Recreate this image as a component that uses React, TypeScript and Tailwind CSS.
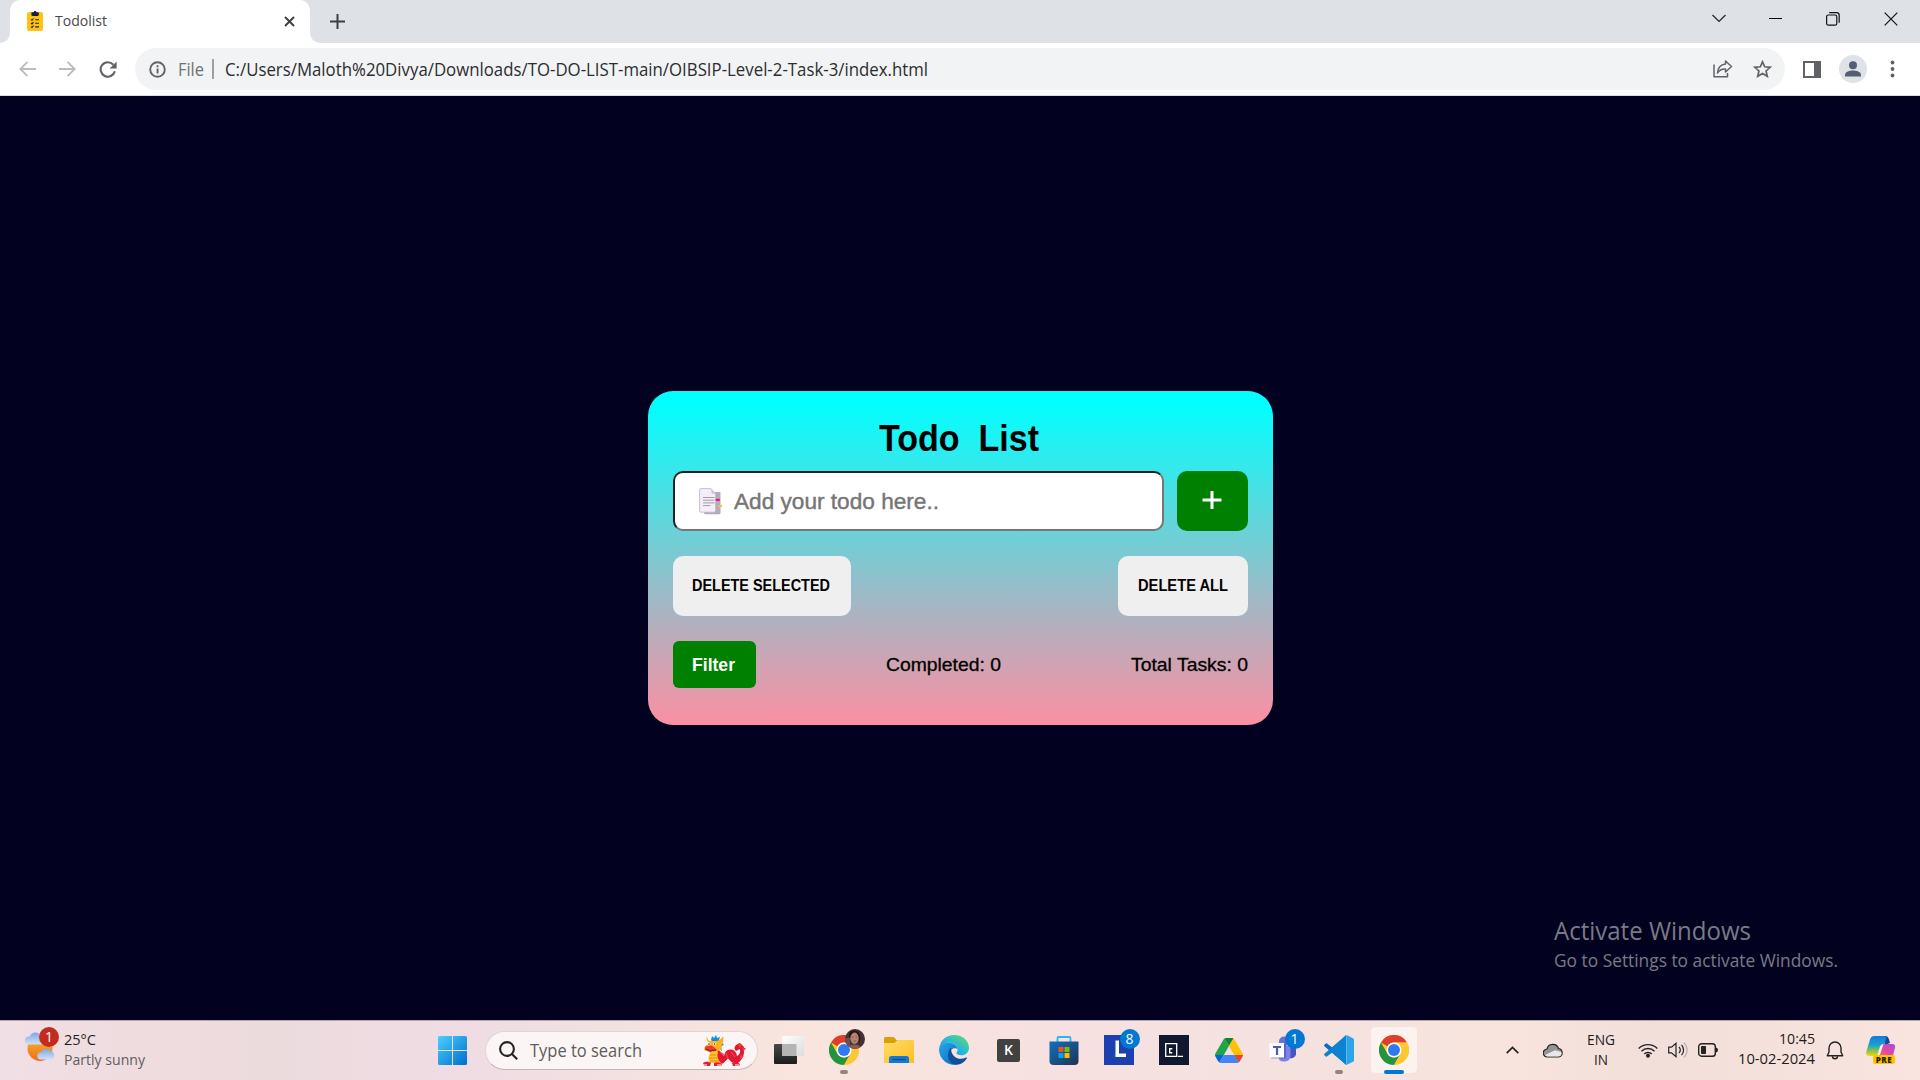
import React, { useLayoutEffect, useRef } from "react";

const UI = "font-['Open_Sans','Noto_Sans',sans-serif]";

/* A single line of text stretched or squeezed to a given width. */
function Fit({ w, className = "", children }: { w: number; className?: string; children: React.ReactNode }) {
  const ref = useRef<HTMLSpanElement>(null);
  useLayoutEffect(() => {
    const el = ref.current;
    if (!el) return;
    el.style.transform = "none";
    const natural = el.getBoundingClientRect().width;
    if (natural > 0) el.style.transform = `scaleX(${w / natural})`;
  }, [w]);
  return (
    <span className={"block shrink-0 whitespace-pre " + className} style={{ width: w }}>
      <span ref={ref} className="inline-block origin-left">{children}</span>
    </span>
  );
}

function Clipboard() {
  return (
    <svg className="ml-[17px] shrink-0" width="16" height="20" viewBox="0 0 16 20">
      <rect x="0" y="1" width="16" height="19" rx="2.2" fill="#ffc20e" />
      <path d="M5 1.2h1.8a1.3 1.3 0 0 1 2.6 0H11q.8 0 .8.8v1.8q0 1.2-1.2 1.2H5.6Q4.400 5 4.400 3.800V2q0-.8.6-.8z" fill="#14213d" />
      <path d="M4 8.400l1 .9 1.500-1.800M4 12l1 .9 1.500-1.800M4 15.600l1 .9 1.500-1.800M8.200 8.700H12M8.200 12.300H12M8.200 15.900H12" stroke="#14213d" strokeWidth="1.100" fill="none" />
    </svg>
  );
}

function TabStrip() {
  return (
    <div className="flex h-[43px] bg-[#dee1e6]">
      <div className="flex w-[10px] items-end bg-white">
        <div className="h-full w-full rounded-br-[10px] bg-[#dee1e6]" />
      </div>
      <div className="flex h-full w-[300px] items-center rounded-t-[10px] bg-white pb-[2px]">
        <Clipboard />
        <Fit w={52} className="ml-[12px] text-[14.500px] leading-5 text-[#45494d]">Todolist</Fit>
        <svg className="mt-[2px] ml-[177px]" width="11" height="11" viewBox="0 0 11 11" stroke="#3c4043" strokeWidth="1.900" fill="none">
          <path d="M1 1l9 9M10 1l-9 9" />
        </svg>
      </div>
      <div className="w-[10px] bg-white">
        <div className="h-full w-full rounded-bl-[10px] bg-[#dee1e6]" />
      </div>
      <svg className="mt-[13px] ml-[9px]" width="17" height="17" viewBox="0 0 17 17" stroke="#3c4043" strokeWidth="2" fill="none">
        <path d="M8.500 1v15M1 8.500h15" />
      </svg>
      <div className="ml-auto flex h-[37px] items-center pr-[22px]">
        <svg width="14" height="9" viewBox="0 0 14 9" fill="none" stroke="#222" strokeWidth="1.200"><path d="M.5 1L7 7.500 13.500 1" /></svg>
        <svg className="ml-[43px]" width="14" height="2" viewBox="0 0 14 2"><path d="M0 0h13v1H0z" fill="#000" /></svg>
        <svg className="ml-[43px]" width="14" height="14" viewBox="0 0 14 14" fill="none" stroke="#111" strokeWidth="1.200">
          <rect x=".6" y="3" width="10.200" height="10.200" rx="1.800" /><path d="M3.200.7H10.500q2.700 0 2.700 2.700V10.800" />
        </svg>
        <svg className="ml-[44px]" width="14" height="14" viewBox="0 0 14 14" fill="none" stroke="#111" strokeWidth="1.200"><path d="M.7.7l12.600 12.600M13.300.7L.7 13.300" /></svg>
      </div>
    </div>
  );
}

function Toolbar() {
  return (
    <div className="flex h-[53px] items-center border-b border-[#dcdee1] bg-white">
      <svg className="ml-[19px]" width="17" height="16" viewBox="0 0 17 16" fill="none" stroke="#babcbe" strokeWidth="1.800"><path d="M17 8H1.500M8.500.8L1.300 8l7.200 7.200" /></svg>
      <svg className="ml-[23px]" width="17" height="16" viewBox="0 0 17 16" fill="none" stroke="#babcbe" strokeWidth="1.800"><path d="M0 8h15.500M8.500.8L15.700 8l-7.200 7.200" /></svg>
      <svg className="ml-[23px]" width="18" height="17" viewBox="0 0 18 17">
        <path d="M15.800 10.200A7.200 7.200 0 1 1 14.300 3.800" fill="none" stroke="#5f6368" strokeWidth="2.100" />
        <path d="M17.600.5V7.500H10.600z" fill="#5f6368" />
      </svg>
      <div className="ml-[18px] flex h-[42px] w-[1650px] items-center rounded-full bg-[#f1f3f4]">
        <svg className="ml-[14px]" width="17" height="17" viewBox="0 0 17 17">
          <circle cx="8.500" cy="8.500" r="7.300" fill="none" stroke="#5f6368" strokeWidth="1.900" />
          <path d="M7.600 7.500h1.900v5H7.600zM7.600 4.300h1.900v1.900H7.600z" fill="#5f6368" />
        </svg>
        <Fit w={26} className="ml-[12px] text-[17.500px] leading-6 text-[#6d7175]">File</Fit>
        <span className="ml-[8px] h-[20px] w-[2px] bg-[#9aa0a6]" />
        <Fit w={703} className="ml-[11px] text-[17.500px] leading-6 text-[#2c2d30]">C:/Users/Maloth%20Divya/Downloads/TO-DO-LIST-main/OIBSIP-Level-2-Task-3/index.html</Fit>
        <svg className="ml-auto" width="20" height="18" viewBox="0 0 20 18" fill="none" stroke="#5f6368" strokeWidth="1.500">
          <path d="M1 4.500V16.800H14.500V13M12.500 1l6 5.500-6 5.500V9Q7.500 8.500 4.500 13 5 5 12.500 4z" strokeLinejoin="round" />
        </svg>
        <svg className="ml-[20px] mr-[13px]" width="19" height="18" viewBox="0 0 19 18" fill="none" stroke="#5f6368" strokeWidth="1.700">
          <path d="M9.500 1.800l2.200 5 5.500.5-4.150 3.650 1.250 5.400L9.500 13.500l-4.800 2.850 1.250-5.400L1.800 7.300l5.500-.5z" />
        </svg>
      </div>
      <svg className="ml-[18px]" width="18" height="17" viewBox="0 0 18 17">
        <path d="M0 0h18v17H0zM2 2v13h9V2z" fill="#5f6368" fillRule="evenodd" />
      </svg>
      <svg className="ml-[18px]" width="28" height="28" viewBox="0 0 28 28">
        <circle cx="14" cy="14" r="14" fill="#dfe2e7" />
        <circle cx="14" cy="10.200" r="4" fill="#535f75" />
        <path d="M6 21.500v-1.800C6 16.800 11 15.500 14 15.500s8 1.300 8 4.200v1.800z" fill="#535f75" />
      </svg>
      <svg className="ml-[23px]" width="5" height="18" viewBox="0 0 5 18" fill="#5f6368">
        <circle cx="2.500" cy="2.500" r="1.900" /><circle cx="2.500" cy="9" r="1.900" /><circle cx="2.500" cy="15.500" r="1.900" />
      </svg>
    </div>
  );
}

function PageIcon() {
  return (
    <svg className="mr-[12px] ml-[24px] shrink-0" width="23" height="27" viewBox="0 0 23 27">
      <path d="M5 4h15.500q1 0 1 1v20q0 1.200-1.200 1.200H6.500Q5 26.200 5 24.700z" fill="#b4acbc" />
      <path d="M1.700.6H12l4.600 5.200V22.500q0 1.700-1.700 1.700H2Q.6 24.200.6 22.800V1.700Q.6.600 1.700.6z" fill="#f3eef8" stroke="#bcb3c4" strokeWidth=".8" />
      <path d="M12.300.8V4q0 1.700 1.700 1.700h2.700z" fill="#cdc4d6" />
      <path d="M4 9.500h11.500M4 12.200h11.500M4 14.900h11.500M4 17.600h7.500" stroke="#998ea4" strokeWidth=".9" />
      <rect x="16.800" y="10.800" width="4" height="2.200" rx=".6" fill="#f70a8d" /><rect x="19.500" y="17" width="3.500" height="2.200" rx=".5" fill="#f9c23c" />
    </svg>
  );
}

function TodoCard() {
  return (
    <div className="flex h-[334px] w-[625px] flex-col rounded-[25px] bg-[linear-gradient(#00ffff_0%,#00ffff_3%,#67d3d9_41%,#a9b4c2_66%,#fb90a3_100%)] p-[25px] font-['Liberation_Sans',Arial,sans-serif] text-black">
      <h1 className="flex justify-center pt-[1px] pr-[2px] text-[36px] leading-[43px] font-bold"><Fit w={160}>{"Todo  List"}</Fit></h1>
      <div className="mt-[11px] flex justify-between">
        <div className="flex h-[60px] w-[491px] items-center rounded-[10px] border-2 border-t-[#222] border-r-[#767676] border-b-[#767676] border-l-[#222] bg-white">
          <PageIcon />
          <Fit w={205} className="pt-[1px] text-[22px] leading-[30px] text-[#757575] [-webkit-text-stroke:0.4px_#757575]">Add your todo here..</Fit>
        </div>
        <button className="flex h-[60px] w-[71px] items-center justify-center rounded-[10px] bg-[#008000]">
          <svg width="20" height="20" viewBox="0 0 20 20" fill="#fff" className="-mt-[2px]"><path d="M8.500 1h3v18h-3zM.5 8.500h19v3H.5z" /></svg>
        </button>
      </div>
      <div className="mt-[25px] flex justify-between text-[17px] leading-6 font-bold">
        <button className="flex h-[60px] items-center rounded-[10px] bg-[#efefef] pr-[21px] pl-[19px]"><Fit w={138}>DELETE SELECTED</Fit></button>
        <button className="flex h-[60px] items-center rounded-[10px] bg-[#efefef] px-[20px]"><Fit w={90}>DELETE ALL</Fit></button>
      </div>
      <div className="mt-[25px] flex items-center justify-between text-[18.500px] leading-6">
        <button className="flex h-[47px] w-[83px] items-center rounded-[6px] bg-[#008000] px-[20px] font-bold text-white"><Fit w={43} className="-ml-[1px]">Filter</Fit></button>
        <Fit w={115} className="[-webkit-text-stroke:0.3px_#000]">Completed: 0</Fit>
        <Fit w={117} className="[-webkit-text-stroke:0.3px_#000]">Total Tasks: 0</Fit>
      </div>
    </div>
  );
}

function Chrome() {
  return (
    <svg width="30" height="30" viewBox="0 0 48 48">
      <circle cx="24" cy="24" r="24" fill="#ffcd1d" />
      <path d="M3.200 12A24 24 0 0 1 44.800 12H24A12 12 0 0 0 13.600 18z" fill="#e33b2e" />
      <path d="M3.200 12L13.600 30A12 12 0 0 0 24 36 12 12 0 0 0 34.400 30L24 48A24 24 0 0 1 3.200 12z" fill="#229342" />
      <path d="M44.800 12A24 24 0 0 1 24 48L34.400 30Q38 20 24 12z" fill="#fcc934" />
      <circle cx="24" cy="24" r="12" fill="#fff" /><circle cx="24" cy="24" r="9.600" fill="#2f7af0" />
    </svg>
  );
}

function TaskView() {
  return (
    <svg width="30" height="30" viewBox="0 0 30 30">
      <defs>
        <linearGradient id="tvd" x2="0" y2="1"><stop stopColor="#494949" /><stop offset="1" stopColor="#1c1c1c" /></linearGradient>
        <linearGradient id="tvl" x2="1" y2="1"><stop stopColor="#fff" /><stop offset="1" stopColor="#dcdcdc" /></linearGradient>
      </defs>
      <rect x="0" y="9" width="23" height="20" rx="1" fill="url(#tvd)" />
      <rect x="8" y="1" width="22" height="20" rx="1" fill="url(#tvl)" /><path d="M8 9h14.500v12H8z" fill="#b4b4b4" />
    </svg>
  );
}

function Portrait() {
  return (
    <svg className="absolute -top-[6px] left-[16px]" width="20" height="20" viewBox="0 0 20 20">
      <defs><clipPath id="pc"><circle cx="10" cy="10" r="10" /></clipPath></defs>
      <g clipPath="url(#pc)">
        <path d="M0 0h20v20H0z" fill="#443134" /><path d="M0 9h5v8H0z" fill="#665054" />
        <ellipse cx="9.500" cy="9" rx="4.200" ry="6" fill="#b98270" />
        <path d="M4 7Q4 1 10 1.500q5 0 5.500 8L14 15V8Q12 3 9.500 3.500 6 4 5 9z" fill="#241819" />
        <path d="M6.800 8H8.500M10.500 8H12.200M8.500 12h2.500" stroke="#7c463d" strokeWidth=".8" />
        <path d="M3 20q1-5 6-4.500 6 0 8 4.500z" fill="#8b5b50" />
      </g>
    </svg>
  );
}

function Folder() {
  return (
    <svg width="30" height="30" viewBox="0 0 30 30">
      <defs><linearGradient id="fo" x2="1" y2="1"><stop stopColor="#ffdc65" /><stop offset="1" stopColor="#fcbf22" /></linearGradient></defs>
      <path d="M0 3.500Q0 2 1.500 2H9q1 0 1.500.8L13 5.500H29V13H0z" fill="#dca007" />
      <path d="M0 8h9.500q1 0 1.700-.8L12.600 6q.7-.8 1.700-.8H29q1 0 1 1V28H0z" fill="url(#fo)" />
      <path d="M5 28v-4.500Q5 21 7.500 21h15Q25 21 25 23.500V28z" fill="#1478d4" /><path d="M8.500 24.500h13" stroke="#084a92" strokeWidth="1.200" />
    </svg>
  );
}

function Edge() {
  return (
    <svg width="30" height="30" viewBox="0 0 30 30">
      <defs>
        <linearGradient id="e1" x1="0" y1="1" x2="1" y2="0"><stop stopColor="#168cd8" /><stop offset=".5" stopColor="#26b9dc" /><stop offset="1" stopColor="#66e057" /></linearGradient>
        <linearGradient id="e2" x1="0" y1="0" x2="1" y2="1"><stop stopColor="#29a7e8" /><stop offset="1" stopColor="#0869bf" /></linearGradient>
      </defs>
      <path d="M.3 13C1.500 5 7.500 0 15 0c9 0 15 6 15 12.700 0 4.700-3.600 7.600-7.600 7.600-3 0-5-1-5-2.200 0-.9 1.300-1.400 1.300-3.600C18.700 10.500 14 7.800 9.500 7.800 4.500 7.800 1.500 10.300.3 13z" fill="url(#e1)" />
      <path d="M.2 13C1.500 9.500 5 7.700 9.600 7.800c4.900.1 9 3 9 6.700-3-3.500-9 .5-8 6 .8 5.500 5 8.500 8.500 8.600A15 15 0 0 1 0 15z" fill="url(#e2)" />
      <path d="M12.200 12.700C7 16.500 8 29 17.500 29.800c4.500-.3 8-2.600 10.300-6.400.4-.7-.2-1.100-.8-.8C19 26.500 11.200 20.500 12.200 12.700z" fill="#114f99" />
    </svg>
  );
}

function Store() {
  return (
    <svg width="30" height="30" viewBox="0 0 30 30">
      <defs><linearGradient id="st" x2="1" y2="1"><stop stopColor="#0f72bd" /><stop offset="1" stopColor="#213153" /></linearGradient></defs>
      <path d="M8.500 8V3.200Q8.500 2 9.700 2h10.600q1.200 0 1.200 1.200V8" fill="none" stroke="#29b5ee" strokeWidth="1.800" />
      <path d="M.5 6.500h29V26q0 4-4 4h-21q-4 0-4-4z" fill="url(#st)" />
      <path d="M9.500 12H14.500v5h-5z" fill="#f25022" /><path d="M15.500 12h5v5h-5z" fill="#7fba00" /><path d="M9.500 18h5v5h-5z" fill="#00a4ef" /><path d="M15.500 18h5v5h-5z" fill="#ffb900" />
    </svg>
  );
}

function Drive() {
  return (
    <svg width="28" height="25" viewBox="0 0 87.3 78">
      <path d="M6.600 66.850l3.850 6.650c.8 1.400 1.950 2.500 3.300 3.300l13.750-23.800H0c0 1.550.4 3.100 1.200 4.500z" fill="#0066da" />
      <path d="M43.650 25L29.900 1.200c-1.350.8-2.500 1.900-3.300 3.300L1.200 48.500A9 9 0 0 0 0 53h27.500z" fill="#23a34a" />
      <path d="M73.550 76.800c1.350-.8 2.500-1.900 3.300-3.300l1.600-2.750L86.100 57.500c.8-1.400 1.200-2.950 1.200-4.500H59.800l5.850 11.500z" fill="#ea4335" />
      <path d="M43.650 25L57.400 1.200C56.050.4 54.500 0 52.900 0H34.400c-1.600 0-3.150.45-4.500 1.200z" fill="#118336" />
      <path d="M59.800 53H27.500L13.750 76.800c1.350.8 2.900 1.200 4.500 1.200h50.800c1.600 0 3.150-.45 4.500-1.200z" fill="#4285f4" />
      <path d="M73.400 26.500L60.700 4.500c-.8-1.400-1.950-2.500-3.300-3.300L43.650 25l16.150 28h27.450c0-1.550-.4-3.100-1.200-4.500z" fill="#ffc107" />
    </svg>
  );
}

function Teams() {
  return (
    <svg width="30" height="30" viewBox="0 0 30 30">
      <circle cx="15" cy="6.500" r="5" fill="#6870d2" /><path d="M20 11h7v8.500q-1 4-7 4z" fill="#4b53bc" />
      <path d="M10 11h11.500v10q-.5 5.500-6.500 5.500T9.500 21z" fill="#7b83eb" />
      <path d="M2 9h15v14.500H2z" fill="#4048a8" opacity=".5" /><path d="M.5 8h14.500v14.500H.5z" fill="#fff" />
      <path d="M4 11h8v2H9.100v7H6.900v-7H4z" fill="#5059b8" />
    </svg>
  );
}

function VsCode() {
  return (
    <svg width="30" height="30" viewBox="0 0 30 30">
      <path d="M22 .3L8.500 12.700 3 8.400q-.6-.4-1.200.1L.4 9.800q-.6.7 0 1.400L22 29.700V21z" fill="#0a6cbd" />
      <path d="M22 29.700L8.500 17.300 3 21.600q-.6.4-1.200-.1L.4 20.200q-.6-.7 0-1.400L22 .3V9z" fill="#0b83d2" />
      <path d="M21.500.3l1.500 0 6 2.900q1 .5 1 1.600V25.200q0 1.100-1 1.600l-6.100 2.900h-1.400q.8-.3.800-1.400V1.700Q22.300.6 21.500.3z" fill="#2ba4ea" />
    </svg>
  );
}

function Badge({ children }: { children: React.ReactNode }) {
  return <span className="absolute -top-[6px] left-[16px] flex h-[20px] w-[20px] items-center justify-center rounded-full bg-[#0078d4] text-[14px] leading-none font-medium text-white">{children}</span>;
}

function PinnedApp({ children, mark }: { children: React.ReactNode; mark?: boolean }) {
  return (
    <div className="relative flex h-[60px] w-[55px] items-center justify-center">
      <div className="relative flex h-[30px] w-[30px] items-center justify-center">{children}</div>
      {mark && <span className="absolute bottom-[6px] h-[4px] w-[8px] rounded-full bg-[#908681]" />}
    </div>
  );
}

function Weather() {
  return (
    <div className="relative ml-[25px] h-[46px] w-[35px]">
      <svg width="34" height="36" viewBox="0 0 34 36">
        <defs>
          <linearGradient id="su" x2="0" y2="1"><stop stopColor="#fbb62d" /><stop offset="1" stopColor="#ed701b" /></linearGradient>
          <linearGradient id="cl" x2="0" y2="1"><stop stopColor="#7ea6e4" /><stop offset="1" stopColor="#d0e1f8" /></linearGradient>
        </defs>
        <circle cx="15" cy="21.500" r="12.500" fill="url(#su)" />
        <path d="M4 17.500a4 4 0 0 1 0-8h.6a6 6 0 0 1 10.900-1Q21 10 20 17.500z" fill="url(#cl)" />
        <path d="M16 32.500a3.700 3.700 0 0 1 0-7.400h.5a5.300 5.300 0 0 1 9.500-.8 4.200 4.200 0 0 1 0 8.200z" fill="url(#cl)" />
      </svg>
      <span className="absolute top-0 left-[14px] flex h-[20px] w-[20px] items-center justify-center rounded-full bg-[#c42b1c] text-[14px] leading-none font-medium text-white">1</span>
    </div>
  );
}

function Dragon() {
  return (
    <svg width="43" height="31" viewBox="0 0 43 31">
      <path d="M8 5l1-4 2 2 2-3 1 3 3-1-1 3 4 0-2 3 3 1-3 3 1 4-5-4z" fill="#178bdc" />
      <path d="M15 14q4 5 6 7 1-7 7-6.500 5 .5 6 6.500 4-2 3-7l-4 2q-3-3 0-6l4-2 4 4 0 6q-1 7-7 10.500l-5-1-4-4-5 5h-9z" fill="#df1836" />
      <path d="M35 8.500l4 1-2 4zM39 12l4 1.500-3 3zM37 20l4 1-4 3z" fill="#f2402f" />
      <path d="M4 1q-2 5 3 7l-5 3-1 4 8 3 9-3 1-6q2-3 1-8-2 4-6 5L8 6Q4 6 4 1z" fill="#ffb116" />
      <path d="M2 12l5-2 4 2 3 3-5 3-6-3z" fill="#f23530" /><path d="M2 14q5 3 11 1" stroke="#8d1425" fill="none" />
      <path d="M9 16l6 1q-2 6 3 11H7Q3 22 9 16z" fill="#ffc22b" /><path d="M7 20h6M6 23h8M7 26h9" stroke="#e58a11" />
      <path d="M0 28q4-3 8 0l-1 3H1zM11 28q5-2 8 1l-1 2h-7zM29 28q5-2 8 1l-1 2h-6z" fill="#e02038" /><path d="M0 30h4M14 30h4M32 30h4" stroke="#fff" />
      <circle cx="6" cy="9" r="1.500" fill="#fff" /><circle cx="6" cy="9" r=".8" fill="#123" /><circle cx="11.500" cy="9" r="1.600" fill="#fff" /><circle cx="11.500" cy="9" r=".8" fill="#123" />
      <path d="M17 17l4 3M23 18l2 6M28 17l4 5" stroke="#f5493f" strokeWidth="1.200" />
    </svg>
  );
}

function Tray() {
  return (
    <div className="ml-auto flex h-full items-center pr-[24px]">
      <svg width="13" height="8" viewBox="0 0 13 8" fill="none" stroke="#222" strokeWidth="1.700"><path d="M.7 7.200l5.800-5.700 5.800 5.700" /></svg>
      <svg className="ml-[24px]" width="20" height="15" viewBox="0 0 20 15">
        <path d="M4.500 14A4 4 0 0 1 4 6 6 6 0 0 1 15.500 5.500 4.300 4.300 0 0 1 15.500 14z" fill="#949494" stroke="#222" strokeWidth="1.200" />
        <path d="M2 12L12 7.300l6.300 1.800q1.200 4.300-2.800 4.300H4.500Q2.800 13.300 2 12z" fill="#e8e8e8" />
      </svg>
      <div className="ml-[24px] flex w-[28px] flex-col items-center text-[14.500px] leading-5">
        <Fit w={28}>ENG</Fit><Fit w={14}>IN</Fit>
      </div>
      <svg className="ml-[23px]" width="20" height="16" viewBox="0 0 20 16" fill="none" stroke="#222" strokeWidth="1.400">
        <path d="M.7 6.500a13 13 0 0 1 18.600 0M3.500 9.200a9.200 9.200 0 0 1 13 0M6.300 12a5.200 5.200 0 0 1 7.400 0" /><circle cx="10" cy="13.800" r="1.300" fill="#222" />
      </svg>
      <svg className="ml-[10px]" width="20" height="16" viewBox="0 0 20 16" fill="none" stroke="#222" strokeWidth="1.200">
        <path d="M.7 5.200H3.500L8 1.300V14.700L3.500 10.800H.7zM11 5a4.500 4.500 0 0 1 0 6M13.500 2.800a7.600 7.600 0 0 1 0 10.400" /><path d="M16 .8a10 10 0 0 1 0 14.400" stroke="#bbb2b0" />
      </svg>
      <svg className="ml-[10px]" width="20" height="14" viewBox="0 0 20 14">
        <rect x=".7" y=".8" width="16.600" height="12.400" rx="2.800" fill="none" stroke="#222" strokeWidth="1.400" /><rect x="3" y="3" width="5" height="8" rx=".8" fill="#222" /><path d="M18 4.500q2 .3 2 2.500t-2 2.500z" fill="#222" />
      </svg>
      <div className="mr-[1px] mb-[2px] ml-[20px] flex w-[77px] flex-col items-end text-[14.500px] leading-5">
        <Fit w={36}>10:45</Fit><Fit w={77}>10-02-2024</Fit>
      </div>
      <svg className="ml-[10px]" width="18" height="19" viewBox="0 0 18 19" fill="none" stroke="#222" strokeWidth="1.400">
        <path d="M9 1a6 6 0 0 0-6 6v4L1.300 14.800H16.700L15 11V7A6 6 0 0 0 9 1z" strokeLinejoin="round" /><path d="M6.500 15.200a2.500 2.500 0 0 0 5 0" />
      </svg>
      <div className="relative ml-[22px] h-[28px] w-[30px]">
        <svg width="30" height="28" viewBox="0 0 30 28">
          <defs>
            <linearGradient id="c1" x2="0" y2="1"><stop stopColor="#1679dc" /><stop offset=".45" stopColor="#1ba0d0" /><stop offset=".75" stopColor="#8ac54a" /><stop offset="1" stopColor="#f5d50d" /></linearGradient>
            <linearGradient id="c2" x1="1" x2="0" y2="1"><stop stopColor="#a14be3" /><stop offset=".5" stopColor="#e94a9c" /><stop offset="1" stopColor="#ff8a52" /></linearGradient>
          </defs>
          <path d="M17 0h2.500q2.500 0 3.300 2.800L24 7l-5 2z" fill="#14489f" />
          <path d="M8 0h10q3 0 2 3L15.500 17q-1 3-4 3H3.500Q-.8 20 .5 15L4 3.500Q5 0 8 0z" fill="url(#c1)" />
          <path d="M17.500 8H26q4 0 3 4l-2.500 9q-1 4-4.500 4h-9q-2.500 0-1.500-3L15 10.500Q15.800 8 17.500 8z" fill="url(#c2)" />
          <path d="M14 10.500q.8-2.500 3.500-2.500L14 18.500q-.8 2-3 2z" fill="#fff4ef" />
        </svg>
        <span className="absolute top-[19px] left-[7px] flex h-[9px] w-[22px] items-center justify-center rounded-[2px] bg-[#ffc400] text-[8px] leading-none font-extrabold tracking-[0.500px] text-[#2a2000]">PRE</span>
      </div>
    </div>
  );
}

function Taskbar() {
  return (
    <div className="flex h-[60px] items-center border-t border-[#b4a8ad] bg-[linear-gradient(90deg,#f1dfe6_0%,#efdcdf_7%,#ecdbdd_14%,#efdce4_23%,#f3e0e1_32%,#f9e5dd_42%,#f6e1e0_55%,#f5e2df_70%,#f9e4dd_78%,#f2dfda_86%,#f9e4df_100%)] pb-[1px] text-[#1f1c1c]">
      <Weather />
      <div className="mb-[1px] ml-[4px] w-[96px] text-[14.500px] leading-5">
        <Fit w={32}>25°C</Fit><Fit w={81} className="text-[#625c5d]">Partly sunny</Fit>
      </div>
      <svg className="ml-[278px]" width="29" height="29" viewBox="0 0 29 29">
        <defs><linearGradient id="wi" x2="1" y2="1"><stop stopColor="#4bd0ff" /><stop offset="1" stopColor="#006dcd" /></linearGradient></defs>
        <path d="M1.500 0H14v14H0V1.500Q0 0 1.500 0zM15 0h12.500Q29 0 29 1.500V14H15zM0 15h14v14H1.500Q0 29 0 27.500zM15 15h14v12.500q0 1.500-1.500 1.500H15z" fill="url(#wi)" />
      </svg>
      <div className="ml-[18px] flex h-[39px] w-[273px] items-center rounded-full border border-[#e4d3d2] border-b-[#c4b4b3] bg-[#fbf6f5]">
        <svg className="ml-[13px]" width="19" height="19" viewBox="0 0 19 19" fill="none" stroke="#242424" strokeWidth="2.100"><circle cx="8" cy="8" r="6.900" /><path d="M12.900 12.900l5.300 5.300" /></svg>
        <Fit w={112} className="ml-[12px] mr-[61px] text-[17.500px] leading-6 text-[#5f5c5b]">Type to search</Fit>
        <Dragon />
      </div>
      <div className="ml-[3px] flex">
        <PinnedApp><TaskView /></PinnedApp>
        <PinnedApp mark><Chrome /><Portrait /></PinnedApp>
        <PinnedApp><Folder /></PinnedApp>
        <PinnedApp><Edge /></PinnedApp>
        <PinnedApp><span className="flex h-[23px] w-[23px] items-center justify-center rounded-[2px] bg-[#414141] text-[14px] leading-none font-semibold text-white">K</span></PinnedApp>
        <PinnedApp><Store /></PinnedApp>
        <PinnedApp>
          <svg width="30" height="30" viewBox="0 0 30 30"><path d="M0 0h30v30H0z" fill="#1d3faf" /><path d="M11 6v12L8 23l4-2z" fill="#0b6a8d" /><path d="M11.500 5.500H15V18.500h7V22H11.500z" fill="#fff" /></svg>
          <Badge>8</Badge>
        </PinnedApp>
        <PinnedApp>
          <svg width="30" height="30" viewBox="0 0 30 30"><path d="M0 0h30v30H0z" fill="#101830" /><path d="M6.700 8.700h11v12.600h-11zM19 21.300h5" stroke="#fff" strokeWidth="1.300" fill="none" /><path d="M13.300 13.700H10.700v4h2.600" stroke="#fff" strokeWidth="1.400" fill="none" /></svg>
        </PinnedApp>
        <PinnedApp><Drive /></PinnedApp>
        <PinnedApp><Teams /><Badge>1</Badge></PinnedApp>
        <PinnedApp mark><VsCode /></PinnedApp>
        <div className="relative flex h-[60px] w-[55px] items-center justify-center">
          <div className="flex h-[48px] w-[48px] items-center justify-center rounded-[5px] border border-[#f1e4e0] bg-[#fcf2ef]"><Chrome /></div>
          <span className="absolute bottom-[6px] h-[4px] w-[20px] rounded-full bg-[#0078d4]" />
        </div>
      </div>
      <Tray />
    </div>
  );
}

export default function App() {
  return (
    <div className={"flex h-[1080px] w-[1920px] flex-col overflow-hidden " + UI}>
      <TabStrip />
      <Toolbar />
      <main className="relative flex flex-1 items-center justify-center bg-[#020220]">
        <TodoCard />
        <div className="absolute top-[816px] left-[1554px] text-[#797a85]">
          <Fit w={197} className="text-[25px] leading-[36px]">Activate Windows</Fit>
          <Fit w={284} className="text-[17.500px] leading-[24px]">Go to Settings to activate Windows.</Fit>
        </div>
      </main>
      <Taskbar />
    </div>
  );
}
